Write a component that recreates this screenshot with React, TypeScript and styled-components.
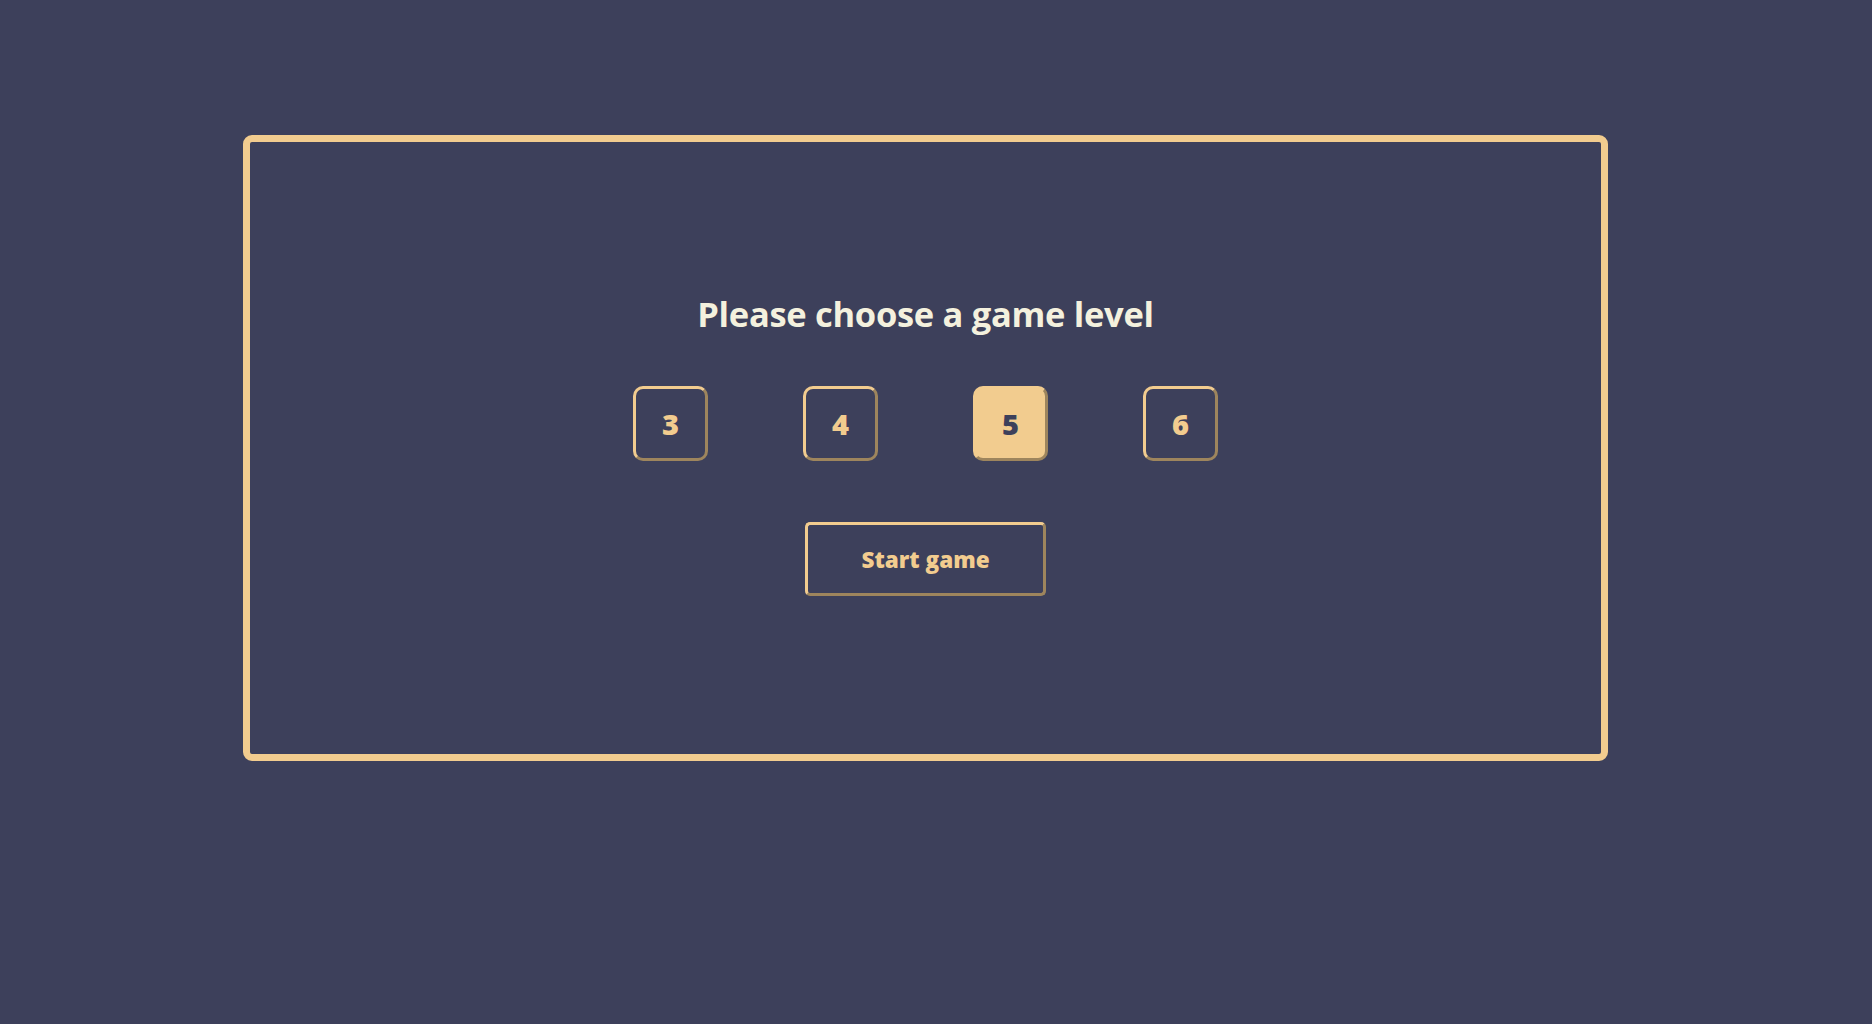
import React, { useState } from "react";
import styled, { createGlobalStyle } from "styled-components";

const GlobalStyle = createGlobalStyle`
  html, body {
    margin: 0;
    padding: 0;
    background: #3d405b;
  }
  body {
    font-family: "Open Sans", "Liberation Sans", sans-serif;
  }
`;

const Page = styled.div`
  min-height: 1024px;
  box-sizing: border-box;
  padding: 135px 264px 0 243px;
  background: #3d405b;
`;

const Panel = styled.section`
  box-sizing: border-box;
  height: 626px;
  border: 7px solid #f2cc8f;
  border-radius: 9px;
  display: flex;
  flex-direction: column;
  align-items: center;
  justify-content: center;
  padding-bottom: 6px;
`;

const Title = styled.h1`
  margin: 0 0 8px;
  color: #f4f1de;
  font-family: "Open Sans", sans-serif;
  font-weight: 700;
  font-size: 34.5px;
  line-height: 40px;
  letter-spacing: -0.3px;
`;

const Levels = styled.div`
  display: flex;
  gap: 95px;
  margin-top: 44px;
`;

const LevelButton = styled.button<{ $active: boolean }>`
  box-sizing: border-box;
  width: 75px;
  height: 75px;
  border: 3px outset #f2cc8f;
  border-radius: 10px;
  background: ${(p) => (p.$active ? "#f2cc8f" : "transparent")};
  color: ${(p) => (p.$active ? "#3d405b" : "#f2cc8f")};
  font-family: "Open Sans", sans-serif;
  font-weight: 800;
  font-size: 29px;
  padding: 0;
  cursor: pointer;
`;

const StartButton = styled.button`
  box-sizing: border-box;
  margin-top: 61px;
  width: 241px;
  height: 74px;
  border: 3px outset #f2cc8f;
  border-radius: 5px;
  background: transparent;
  color: #f2cc8f;
  font-family: "Open Sans", sans-serif;
  font-weight: 800;
  font-size: 22.5px;
  cursor: pointer;
`;

export default function App() {
  const [level, setLevel] = useState(5);
  return (
    <>
      <GlobalStyle />
      <Page>
        <Panel>
          <Title>Please choose a game level</Title>
          <Levels>
            {[3, 4, 5, 6].map((n) => (
              <LevelButton key={n} $active={n === level} onClick={() => setLevel(n)}>
                {n}
              </LevelButton>
            ))}
          </Levels>
          <StartButton>Start game</StartButton>
        </Panel>
      </Page>
    </>
  );
}
